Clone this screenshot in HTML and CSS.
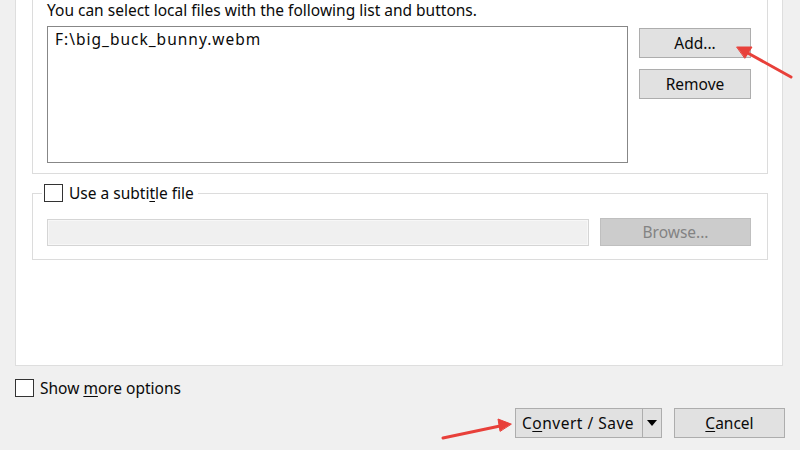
FILE: index.html
```html
<!DOCTYPE html>
<html>
<head>
<meta charset="utf-8">
<link rel="stylesheet" href="styles.css">
</head>
<body>
<div class="window">
  <div class="panel">
    <div class="group files">
      <p class="hint">You can select local files with the following list and buttons.</p>
      <div class="files-row">
        <div class="listbox"><div class="item">F:\big_buck_bunny.webm</div></div>
        <div class="side-buttons">
          <div class="btn">Add...</div>
          <div class="btn">Remove</div>
        </div>
      </div>
    </div>
    <fieldset class="group subs">
      <legend class="legend"><span class="check"></span><span>Use a subti<u>t</u>le file</span></legend>
      <div class="subs-row">
        <div class="input"></div>
        <div class="btn disabled browse">Browse...</div>
      </div>
    </fieldset>
  </div>
  <div class="more"><span class="check"></span><span>Show <u>m</u>ore options</span></div>
  <div class="actions">
    <div class="btn split"><span class="split-label">C<u>o</u>nvert / Save</span><span class="split-drop"><svg width="10" height="6" viewBox="0 0 10 6"><path d="M0 0H10L5 6Z" fill="#000"/></svg></span></div>
    <div class="btn cancel"><u>C</u>ancel</div>
  </div>
</div>
<svg class="arrows" width="800" height="450" viewBox="0 0 800 450">
  <g stroke="#e8403a" stroke-width="3" stroke-linecap="round" fill="#e8403a">
    <line x1="791" y1="77" x2="746" y2="52"/>
    <path d="M737 47 L752 47 L745 58 Z" stroke-width="1"/>
    <line x1="443" y1="438" x2="500" y2="426"/>
    <path d="M511 424 L498 419 L500 431 Z" stroke-width="1"/>
  </g>
</svg>
</body>
</html>
```
FILE: styles.css
```css
* { box-sizing: border-box; }
html, body {
  margin: 0;
  padding: 0;
  width: 800px;
  height: 450px;
  overflow: hidden;
  background: #f0f0f0;
  font-family: "Noto Sans", "Open Sans", sans-serif;
  font-size: 15.5px;
  color: #0a0a0a;
}
body { position: relative; }
.window {
  display: flex;
  flex-direction: column;
}
.panel {
  margin: -20px 0 0 15px;
  width: 768px;
  height: 386px;
  background: #fff;
  border: 1px solid #dedede;
  border-top: none;
  display: flex;
  flex-direction: column;
}
.group {
  width: 736px;
  margin-left: 16px;
  border: 1px solid #dcdcdc;
}
.files {
  padding: 20px 16px 10px 14px;
}
.hint {
  margin: 0 0 7px;
  line-height: 18px;
  height: 18px;
}
.files-row {
  display: flex;
  gap: 11px;
  align-items: flex-start;
}
.listbox {
  flex: 1;
  height: 137px;
  border: 1px solid #878787;
  padding: 2px 7px;
}
.item { line-height: 20px; letter-spacing: 1px; }
.side-buttons {
  display: flex;
  flex-direction: column;
  gap: 11px;
  margin-top: 2px;
  width: 112px;
}
.btn {
  height: 30px;
  background: #e1e1e1;
  border: 1px solid #adadad;
  display: flex;
  align-items: center;
  justify-content: center;
  line-height: 18px;
}
.btn.disabled {
  background: #cccccc;
  border-color: #bfbfbf;
  color: #838383;
}
.subs {
  margin: 10px 0 0 16px;
  padding: 16px 16px 13px 14px;
  min-width: 0;
}
.legend {
  display: flex;
  align-items: center;
  gap: 6px;
  margin-left: -5px;
  padding: 0 4px 0 2px;
  height: 18px;
  line-height: 18px;
}
.check {
  display: inline-block;
  width: 19px;
  height: 18px;
  border: 1px solid #333;
  background: #fff;
  flex: none;
}
.subs-row {
  display: flex;
  gap: 11px;
  align-items: center;
}
.input {
  flex: 1;
  height: 27px;
  background: #f0f0f0;
  border: 1px solid #d5d5d5;
  box-shadow: inset 0 0 0 1px #f7f7f7;
}
.browse {
  width: 151px;
  height: 28px;
}
.more {
  margin: 12px 0 0 15px;
  display: flex;
  align-items: center;
  gap: 6px;
  height: 19px;
  line-height: 18px;
}
.actions {
  margin-top: 11px;
  display: flex;
  justify-content: flex-end;
  gap: 12px;
  padding-right: 15px;
}
.split {
  width: 147px;
  justify-content: flex-start;
  padding-left: 6px;
}
.split-label {
  flex: 1;
  text-align: left;
  letter-spacing: 0.5px;
}
.split-drop {
  width: 19px;
  height: 100%;
  border-left: 1px solid #adadad;
  display: flex;
  align-items: center;
  justify-content: center;
  margin: 0;
}
.cancel { width: 111px; }
u { text-underline-offset: 2px; }
.arrows {
  position: absolute;
  left: 0;
  top: 0;
  pointer-events: none;
}
```
